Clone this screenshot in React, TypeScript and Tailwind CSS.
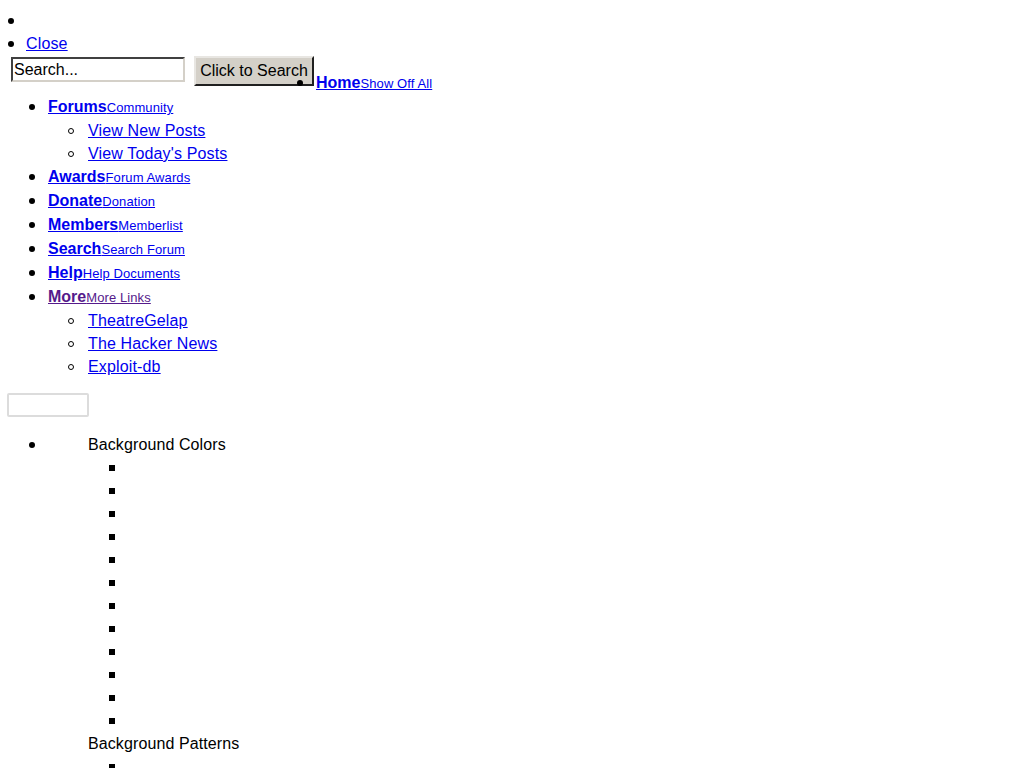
import React from "react";

type Item = { title: string; sub: string; visited?: boolean; children?: string[] };

const navItems: Item[] = [
  { title: "Forums", sub: "Community", children: ["View New Posts", "View Today's Posts"] },
  { title: "Awards", sub: "Forum Awards" },
  { title: "Donate", sub: "Donation" },
  { title: "Members", sub: "Memberlist" },
  { title: "Search", sub: "Search Forum" },
  { title: "Help", sub: "Help Documents" },
  { title: "More", sub: "More Links", visited: true, children: ["TheatreGelap", "The Hacker News", "Exploit-db"] },
];

const Disc = () => <span className="block h-[6px] w-[6px] shrink-0 rounded-full bg-black" />;
const Circle = () => <span className="block h-[6px] w-[6px] shrink-0 rounded-full border border-black" />;
const Square = () => <span className="block h-[6px] w-[6px] shrink-0 bg-black" />;

const NavLink = ({ item }: { item: Item }) => {
  const color = item.visited ? "text-[#551a8b]" : "text-[#0000ee]";
  return (
    <a href="#" className={`${color} underline`}>
      <span className="text-[16px] font-bold">{item.title}</span>
      <span className="text-[13px] tracking-[0.1px]">{item.sub}</span>
    </a>
  );
};

const App = () => {
  return (
    <div className="min-h-screen bg-white font-['Liberation_Sans',Arial,sans-serif] text-[16px] text-black">

      {/* Top list */}

      <ul className="pt-[9px]">
        <li className="flex h-[23px] items-center pl-[8px]">
          <Disc />
        </li>
        <li className="flex h-[23px] items-center pl-[8px]">
          <Disc />
          <a href="#" className="ml-[12px] tracking-[0.15px] text-[#0000ee] underline">Close</a>
        </li>
      </ul>

      {/* Search form + Home */}

      <div className="mt-[1px] flex h-[38px] items-start pl-[11px]">
        <input
          defaultValue="Search..."
          className="mt-[1px] h-[25px] w-[174px] border-2 border-t-[#404040] border-l-[#404040] border-r-[#d4d0c8] border-b-[#d4d0c8] bg-white px-[1px] text-[16px] text-black outline-none"
        />
        <button className="ml-[9px] h-[30px] w-[120px] border-2 border-t-[#e8e6e2] border-l-[#e8e6e2] border-r-[#202020] border-b-[#202020] bg-[#d4d0c8] text-[16px] text-black">
          Click to Search
        </button>
        <div className="ml-[-17px] mt-[24px]">
          <Disc />
        </div>
        <div className="ml-[13px] mt-[15px] flex h-[24px] items-center">
          <NavLink item={{ title: "Home", sub: "Show Off All" }} />
        </div>
      </div>

      {/* Nav */}

      <ul className="pt-[1px]">
        {navItems.map((item) => (
          <li key={item.title}>
            <div className="flex h-[24px] items-center pl-[29px]">
              <Disc />
              <span className="ml-[13px]">
                <NavLink item={item} />
              </span>
            </div>
            {item.children && (
              <ul>
                {item.children.map((child) => (
                  <li key={child} className="flex h-[23px] items-center pl-[68px]">
                    <Circle />
                    <a href="#" className="ml-[14px] tracking-[0.15px] text-[#0000ee] underline">{child}</a>
                  </li>
                ))}
              </ul>
            )}
          </li>
        ))}
      </ul>

      {/* Style switcher */}

      <div className="mt-[15px] pl-[7px]">
        <div className="h-[24px] w-[82px] rounded-[2px] border-2 border-[#dcdcdc] bg-white" />
      </div>

      <ul className="mt-[16px]">
        <li>
          <div className="flex h-[23px] items-center pl-[29px]">
            <Disc />
            <span className="ml-[53px] tracking-[0.1px]">Background Colors</span>
          </div>
          <ul>
            {Array.from({ length: 12 }).map((_, i) => (
              <li key={i} className="flex h-[23px] items-center pl-[109px]">
                <Square />
              </li>
            ))}
          </ul>
          <div className="flex h-[23px] items-center pl-[88px] tracking-[0.1px]">Background Patterns</div>
          <ul>
            {Array.from({ length: 4 }).map((_, i) => (
              <li key={i} className="flex h-[23px] items-center pl-[109px]">
                <Square />
              </li>
            ))}
          </ul>
        </li>
      </ul>

    </div>
  );
};

export default App;
